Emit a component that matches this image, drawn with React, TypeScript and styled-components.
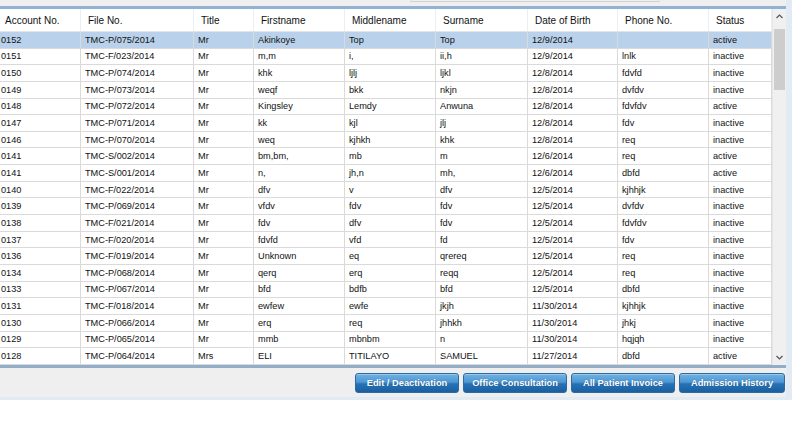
import styled, { createGlobalStyle } from "styled-components";

type Patient = {
  account: string;
  fileNo: string;
  title: string;
  first: string;
  middle: string;
  surname: string;
  dob: string;
  phone: string;
  status: string;
};

const columns = [
  { label: "Account No.", width: 81 },
  { label: "File No.", width: 113 },
  { label: "Title", width: 60 },
  { label: "Firstname", width: 91 },
  { label: "Middlename", width: 91 },
  { label: "Surname", width: 92 },
  { label: "Date of Birth", width: 90 },
  { label: "Phone No.", width: 91 },
  { label: "Status", width: 63 },
];

const raw = `0152|TMC-P/075/2014|Mr|Akinkoye|Top|Top|12/9/2014||active
0151|TMC-F/023/2014|Mr|m,m|i,|ii,h|12/9/2014|lnlk|inactive
0150|TMC-P/074/2014|Mr|khk|ljlj|ljkl|12/8/2014|fdvfd|inactive
0149|TMC-P/073/2014|Mr|weqf|bkk|nkjn|12/8/2014|dvfdv|inactive
0148|TMC-P/072/2014|Mr|Kingsley|Lemdy|Anwuna|12/8/2014|fdvfdv|active
0147|TMC-P/071/2014|Mr|kk|kjl|jlj|12/8/2014|fdv|inactive
0146|TMC-P/070/2014|Mr|weq|kjhkh|khk|12/8/2014|req|inactive
0141|TMC-S/002/2014|Mr|bm,bm,|mb|m|12/6/2014|req|active
0141|TMC-S/001/2014|Mr|n,|jh,n|mh,|12/6/2014|dbfd|active
0140|TMC-F/022/2014|Mr|dfv|v|dfv|12/5/2014|kjhhjk|inactive
0139|TMC-P/069/2014|Mr|vfdv|fdv|fdv|12/5/2014|dvfdv|inactive
0138|TMC-F/021/2014|Mr|fdv|dfv|fdv|12/5/2014|fdvfdv|inactive
0137|TMC-F/020/2014|Mr|fdvfd|vfd|fd|12/5/2014|fdv|inactive
0136|TMC-F/019/2014|Mr|Unknown|eq|qrereq|12/5/2014|req|inactive
0134|TMC-P/068/2014|Mr|qerq|erq|reqq|12/5/2014|req|inactive
0133|TMC-P/067/2014|Mr|bfd|bdfb|bfd|12/5/2014|dbfd|inactive
0131|TMC-F/018/2014|Mr|ewfew|ewfe|jkjh|11/30/2014|kjhhjk|inactive
0130|TMC-P/066/2014|Mr|erq|req|jhhkh|11/30/2014|jhkj|inactive
0129|TMC-P/065/2014|Mr|mmb|mbnbm|n|11/30/2014|hqjqh|inactive
0128|TMC-P/064/2014|Mrs|ELI|TITILAYO|SAMUEL|11/27/2014|dbfd|active`;

const patients: Patient[] = raw.split("\n").map((line) => {
  const [account, fileNo, title, first, middle, surname, dob, phone, status] =
    line.split("|");
  return { account, fileNo, title, first, middle, surname, dob, phone, status };
});

const template = columns.map((c) => `${c.width}px`).join(" ");

const buttons = [
  { label: "Edit / Deactivation", width: 104 },
  { label: "Office Consultation", width: 104 },
  { label: "All Patient Invoice", width: 104 },
  { label: "Admission History", width: 106 },
];

const App = () => {
  return (
    <>
      <GlobalStyle />
      <Frame>
        <TopStrip>
          <SearchEdge />
        </TopStrip>
        <GridBox>
          <Table>
            <HeaderRow>
              {columns.map((c, i) => (
                <HeaderCell key={c.label} $first={i === 0}>
                  {c.label}
                </HeaderCell>
              ))}
            </HeaderRow>
            {patients.map((p, i) => (
              <Row key={i} $selected={i === 0}>
                {[
                  p.account,
                  p.fileNo,
                  p.title,
                  p.first,
                  p.middle,
                  p.surname,
                  p.dob,
                  p.phone,
                  p.status,
                ].map((v, j) => (
                  <Cell key={j} $first={j === 0}>
                    {v}
                  </Cell>
                ))}
              </Row>
            ))}
          </Table>
          <ScrollBar>
            <Arrow>
              <svg width="7" height="5" viewBox="0 0 7 5">
                <path d="M0.5 4 L3.5 1 L6.5 4" fill="none" stroke="#555" strokeWidth="1.2" />
              </svg>
            </Arrow>
            <Track>
              <Thumb />
            </Track>
            <Arrow>
              <svg width="7" height="5" viewBox="0 0 7 5">
                <path d="M0.5 1 L3.5 4 L6.5 1" fill="none" stroke="#555" strokeWidth="1.2" />
              </svg>
            </Arrow>
          </ScrollBar>
        </GridBox>
        <ButtonBar>
          {buttons.map((b) => (
            <ActionButton key={b.label} $width={b.width}>
              {b.label}
            </ActionButton>
          ))}
        </ButtonBar>
      </Frame>
    </>
  );
};

const GlobalStyle = createGlobalStyle`
  html, body {
    margin: 0;
    padding: 0;
    background: #ffffff;
  }
  body {
    width: 800px;
    height: 443px;
    overflow: hidden;
    font-family: "Liberation Sans", Arial, sans-serif;
  }
`;

const Frame = styled.div`
  width: 792px;
  box-sizing: border-box;
  background: #efefef;
  border-right: 6px solid #e2ebf4;
  border-bottom: 3px solid #e2ebf4;
  display: flex;
  flex-direction: column;
`;

const TopStrip = styled.div`
  height: 6px;
`;

const SearchEdge = styled.div`
  margin-left: 410px;
  width: 248px;
  height: 1px;
  border-bottom: 1px solid #d2d2d2;
  border-left: 1px solid #e2e2e2;
  border-right: 1px solid #e2e2e2;
`;

const GridBox = styled.div`
  display: flex;
  border-top: 3px solid #93b2d3;
  border-bottom: 3px solid #93adc9;
  width: 786px;
  box-sizing: border-box;
  background: #ffffff;
`;

const Table = styled.div`
  width: 772px;
  display: flex;
  flex-direction: column;
  overflow: hidden;
`;

const HeaderRow = styled.div`
  display: grid;
  grid-template-columns: ${template};
  height: 23px;
  background: #ffffff;
  border-bottom: 1px solid #e4e4e4;
  box-sizing: border-box;
`;

const HeaderCell = styled.div<{ $first?: boolean }>`
  display: flex;
  align-items: center;
  padding-left: ${(p) => (p.$first ? 5 : 7)}px;
  font-size: 10px;
  color: #111;
  border-right: 1px solid #eaeff5;
  white-space: nowrap;
  overflow: hidden;
`;

const Row = styled.div<{ $selected?: boolean }>`
  display: grid;
  grid-template-columns: ${template};
  height: 16.65px;
  box-sizing: border-box;
  border-bottom: 1px solid #dadada;
  background: ${(p) => (p.$selected ? "#b9d1ea" : "#ffffff")};
`;

const Cell = styled.div<{ $first?: boolean }>`
  display: flex;
  align-items: center;
  padding-left: ${(p) => (p.$first ? 1 : 4)}px;
  font-size: 9.2px;
  color: #111;
  border-right: 1px solid #dadada;
  white-space: nowrap;
  overflow: hidden;
`;

const ScrollBar = styled.div`
  width: 14px;
  display: flex;
  flex-direction: column;
  background: #f0f0f0;
  border-left: 1px solid #e6e6e6;
  box-sizing: border-box;
`;

const Arrow = styled.div`
  height: 14px;
  display: flex;
  align-items: center;
  justify-content: center;
`;

const Track = styled.div`
  flex: 1;
  padding: 6px 1px 0 1px;
`;

const Thumb = styled.div`
  height: 61px;
  background: #cdcdcd;
`;

const ButtonBar = styled.div`
  display: flex;
  justify-content: flex-end;
  gap: 4px;
  height: 29px;
  padding-top: 5px;
  padding-right: 1px;
  box-sizing: border-box;
`;

const ActionButton = styled.button<{ $width: number }>`
  width: ${(p) => p.$width}px;
  height: 20px;
  padding: 0;
  border: 1px solid #2a6aa5;
  border-radius: 3px;
  background: linear-gradient(
    to bottom,
    #6fb2e4 0%,
    #4e97d3 45%,
    #2672b6 55%,
    #1a5f9f 100%
  );
  color: #ffffff;
  font-family: "Liberation Sans", Arial, sans-serif;
  font-weight: bold;
  font-size: 9.3px;
  text-shadow: 0 0 1px rgba(0, 0, 0, 0.35);
  box-shadow: inset 0 1px 0 rgba(255, 255, 255, 0.3);
  cursor: pointer;
`;

export default App;
